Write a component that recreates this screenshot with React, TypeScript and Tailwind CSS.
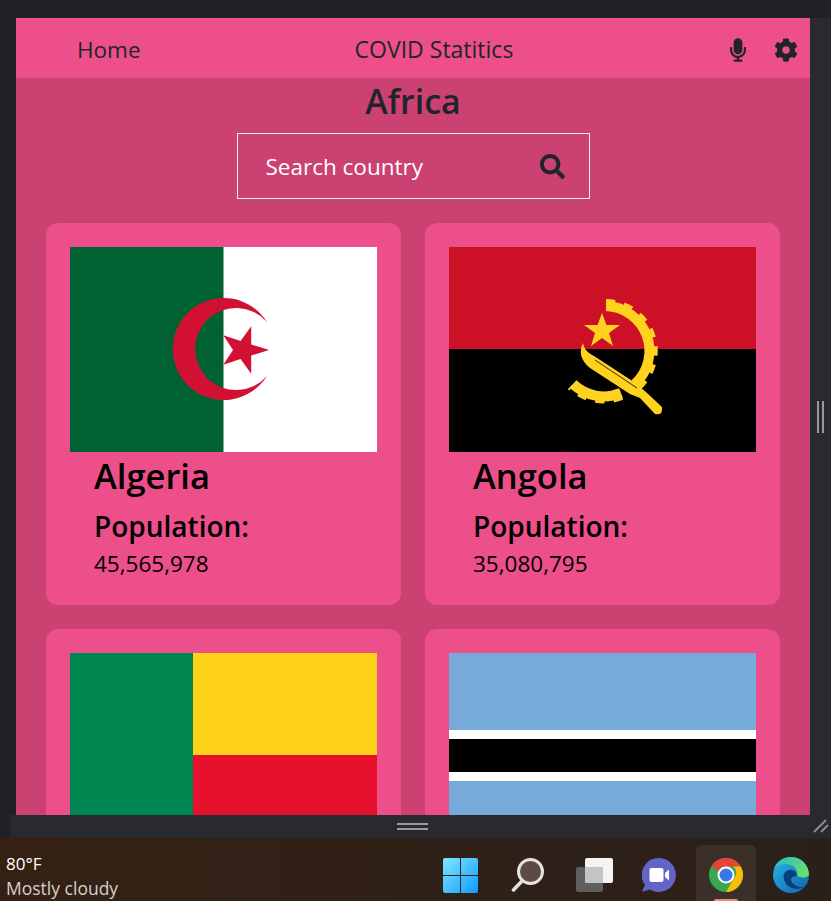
import React from 'react';
import { FaCog, FaMicrophone, FaSearch } from 'react-icons/fa';

const AlgeriaFlag = () => (
    <svg viewBox="0 0 307 205" className="block w-full h-full">
        <rect width="307" height="205" fill="#fff" />
        <rect width="153.5" height="205" fill="#006233" />
        <path d="M197 75A51 51 0 1 0 197 129A41 41 0 1 1 197 75Z" fill="#d21034" />
        <polygon points="199,103 181.2,108.6 181.2,126.8 170.6,112 153.3,117.7 163,103 153.3,88.3 170.6,94 181.2,79.2 181.2,97.4" fill="#d21034" />
    </svg>
);

const AngolaFlag = () => (
    <svg viewBox="0 0 307 205" className="block w-full h-full">
        <rect width="307" height="102" fill="#cc1126" />
        <rect y="102" width="307" height="103" fill="#000" />
        <polygon points="153,66 157.500,78 171,78 160,86 164,99 153,91 142,99 146,86 135,78 148.500,78" fill="#ffd21f" />
        <path d="M157 59A45 45 0 0 1 186 137" fill="none" stroke="#ffd21f" strokeWidth="10" />
        <path d="M157 55A49 49 0 0 1 190 140" fill="none" stroke="#ffd21f" strokeWidth="6" strokeDasharray="9 9" />
        <path d="M172 146A45 45 0 0 1 124 137" fill="none" stroke="#ffd21f" strokeWidth="10" />
        <path d="M173 150A49 49 0 0 1 121 140" fill="none" stroke="#ffd21f" strokeWidth="6" strokeDasharray="9 9" />
        <path d="M134 96C130 104 131 113 141 121L181 147L191 151L206 167Q214 169 213 160L198 146L185 135L145 109C139 106 135 102 134 96Z" fill="#ffd21f" />
        <path d="M146 113L188 141" stroke="#000" strokeWidth="0.8" />
    </svg>
);

const BeninFlag = () => (
    <svg viewBox="0 0 307 205" className="block w-full h-full">
        <rect width="307" height="102" fill="#fcd116" />
        <rect y="102" width="307" height="103" fill="#e8112d" />
        <rect width="123" height="205" fill="#008751" />
    </svg>
);

const BotswanaFlag = () => (
    <svg viewBox="0 0 307 205" className="block w-full h-full">
        <rect width="307" height="205" fill="#75aadb" />
        <rect y="77" width="307" height="51" fill="#fff" />
        <rect y="86" width="307" height="33" fill="#000" />
    </svg>
);

// the last two cards run past the bottom of the window, only their flags show
const countries = [
    { id: 'dza', name: 'Algeria', population: '45,565,978', Flag: AlgeriaFlag },
    { id: 'ago', name: 'Angola', population: '35,080,795', Flag: AngolaFlag },
    { id: 'ben', Flag: BeninFlag },
    { id: 'bwa', Flag: BotswanaFlag },
];

const WindowsIcon = () => (
    <svg viewBox="0 0 35 35" className="w-[35px] h-[35px]">
        <defs>
            <linearGradient id="win" x1="0" y1="0" x2="1" y2="1">
                <stop offset="0" stopColor="#7ee8ff" />
                <stop offset="1" stopColor="#0f9bff" />
            </linearGradient>
        </defs>
        <path d="M2 0H17V17H0V2Q0 0 2 0ZM18 0H33Q35 0 35 2V17H18ZM0 18H17V35H2Q0 35 0 33ZM18 18H35V33Q35 35 33 35H18Z" fill="url(#win)" />
    </svg>
);

const SearchIcon = () => (
    <svg viewBox="0 0 33 34" className="w-[33px] h-[34px]">
        <circle cx="19.500" cy="13.500" r="12" fill="#5a4b45" stroke="#e4e2e0" strokeWidth="3" />
        <path d="M11 23L2.500 32" stroke="#e4e2e0" strokeWidth="3.500" strokeLinecap="round" />
    </svg>
);

const TaskViewIcon = () => (
    <svg viewBox="0 0 37 34" className="w-[37px] h-[34px]">
        <rect x="9" y="0" width="28" height="25" rx="2" fill="#f4f4f4" />
        <rect x="0" y="9" width="27" height="25" rx="2" fill="#5f5f5f" />
        <rect x="9" y="9" width="18" height="16" rx="1" fill="#c4c4c4" />
    </svg>
);

const ChatIcon = () => (
    <svg viewBox="0 0 34 34" className="w-[34px] h-[34px]">
        <path d="M17 0A17 17 0 1 1 8 31.500L1.500 33.500Q0 33.500 .5 32L3 27A17 17 0 0 1 17 0Z" fill="#6264c8" />
        <rect x="7.500" y="10" width="14" height="14" rx="2" fill="#fff" />
        <path d="M23 15L27 11.500V22.500L23 19Z" fill="#fff" />
    </svg>
);

const ChromeIcon = () => (
    <svg viewBox="0 0 34 34" className="w-[34px] h-[34px]">
        <circle cx="17" cy="17" r="17" fill="#34a853" />
        <path d="M17 0A17 17 0 0 1 31.700 8.500H17A8.500 8.500 0 0 0 9.300 13.500L2.800 7.500A17 17 0 0 1 17 0Z" fill="#ea4335" />
        <path d="M31.700 8.500A17 17 0 0 1 17 34L24.500 21A8.500 8.500 0 0 0 24.500 8.500Z" fill="#fbbc04" />
        <circle cx="17" cy="17" r="8.500" fill="#fff" />
        <circle cx="17" cy="17" r="6.500" fill="#3b78e7" />
    </svg>
);

const EdgeIcon = () => (
    <svg viewBox="0 0 36 36" className="w-[36px] h-[36px]">
        <defs>
            <linearGradient id="edge" x1="0" y1="0" x2="1" y2="1">
                <stop offset="0" stopColor="#2bb6e8" />
                <stop offset="1" stopColor="#0f62a8" />
            </linearGradient>
            <linearGradient id="edge2" x1="0" y1="0" x2="1" y2="0.400">
                <stop offset="0" stopColor="#27b5d9" />
                <stop offset="1" stopColor="#66e06a" />
            </linearGradient>
        </defs>
        <circle cx="18" cy="18" r="18" fill="url(#edge)" />
        <path d="M36 18C36 8 28 0 18 0C9 0 3 5 1 12C5 7 12 6 18 8C23 10 25 14 24 19C30 21 34 21 36 18Z" fill="url(#edge2)" />
        <path d="M24 19C24 15 20 12 16 13C11 14 9 19 12 25C15 31 23 34 31 30C25 31 18 27 18 22C19 20 21 19 24 19Z" fill="#0b3f7a" />
    </svg>
);

const App: React.FC = () => {
    return (
        <div className="w-[831px] h-[901px] flex flex-col overflow-hidden bg-[#202124] font-['Open_Sans',sans-serif]">
            <div className="flex h-[797px] mt-[18px]">
                <div className="w-4 shrink-0" />
                <div className="w-[794px] shrink-0 overflow-hidden bg-[#ca4172] text-[#212529]">
                    <nav className="h-[60px] flex items-center bg-[#ed4f8a]">
                        <span className="ml-[61px] mt-[3px] text-[22.5px]">Home</span>
                        <span className="ml-[214px] mt-[3px] text-[23px]">COVID Statitics</span>
                        <div className="ml-auto mr-3 mt-1 flex items-center gap-7">
                            <FaMicrophone className="w-4 h-6" />
                            <FaCog className="w-6 h-6" />
                        </div>
                    </nav>
                    <h1 className="text-center text-[34px] leading-[47px] font-semibold">Africa</h1>
                    <div className="w-[353px] h-[66px] mx-auto mt-[8px] flex items-center border border-[#f1f1f1] pl-[28px] pr-6">
                        <input
                            placeholder="Search country"
                            className="flex-1 min-w-0 mt-[2px] bg-transparent outline-none text-[22.5px] text-white placeholder:text-white"
                        />
                        <FaSearch className="w-[25px] h-[25px]" />
                    </div>
                    <div className="grid grid-cols-2 gap-6 px-[30px] mt-6">
                        {countries.map(({ id, name, population, Flag }) => (
                            <div key={id} className="h-[382px] bg-[#ed4f8a] rounded-xl p-6 text-black">
                                <div className="w-[307px] h-[205px]">
                                    <Flag />
                                </div>
                                {name && (
                                    <div className="pl-6">
                                        <h2 className="text-[34.5px] leading-[47px] font-semibold">{name}</h2>
                                        <h3 className="text-[28px] leading-[38px] mt-2 font-semibold">Population:</h3>
                                        <p className="text-[22.5px] leading-[38px]">{population}</p>
                                    </div>
                                )}
                            </div>
                        ))}
                    </div>
                </div>
                <div className="flex-1 bg-[#292a2d] flex items-center justify-center">
                    <div className="w-[7px] h-8 border-x-2 border-[#9a9a9a]" />
                </div>
            </div>
            <div className="h-[23px] shrink-0 ml-[10px] bg-[#292a2d] flex items-center relative">
                <div className="ml-[387px] w-[31px] h-[7px] border-y-2 border-[#9a9a9a]" />
                <svg viewBox="0 0 16 14" className="absolute right-[2px] top-[4px] w-4 h-[14px]">
                    <path d="M1 13L13 1M8 13L15 6" stroke="#8c8c8c" strokeWidth="2" />
                </svg>
            </div>
            <footer className="h-[63px] shrink-0 flex items-start bg-gradient-to-r from-[#352114] to-[#2a201a]">
                <div className="w-[443px] shrink-0 pl-[6px] mt-[14px]">
                    <p className="text-[17px] leading-6 text-white">80°F</p>
                    <p className="text-[17.5px] leading-6 text-[#d5cfc9]">Mostly cloudy</p>
                </div>
                <div className="flex items-start mt-5">
                    <WindowsIcon />
                    <div className="ml-[33px]"><SearchIcon /></div>
                    <div className="ml-8"><TaskViewIcon /></div>
                    <div className="ml-[29px]"><ChatIcon /></div>
                    <div className="ml-5 w-[60px] h-[56px] -mt-[13px] relative flex justify-center pt-[13px] bg-[#3b3028] rounded-t-md">
                        <ChromeIcon />
                        <span className="absolute left-[18px] bottom-0 w-6 h-[2px] bg-[#f08a6e] rounded-t" />
                    </div>
                    <div className="ml-[17px] -mt-[1px]"><EdgeIcon /></div>
                </div>
            </footer>
        </div>
    );
};

export default App;
